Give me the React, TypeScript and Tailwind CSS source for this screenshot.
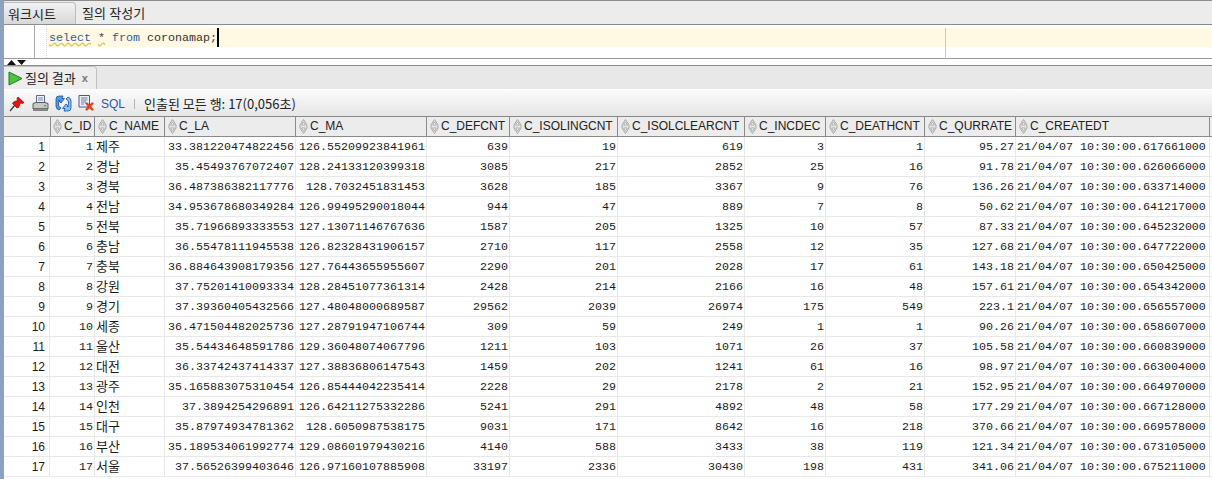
import React from 'react';

const columns = [
  { name: 'C_ID', w: 'w-[45px]' },
  { name: 'C_NAME', w: 'w-[70px]' },
  { name: 'C_LA', w: 'w-[131px]' },
  { name: 'C_MA', w: 'w-[131px]' },
  { name: 'C_DEFCNT', w: 'w-[83px]' },
  { name: 'C_ISOLINGCNT', w: 'w-[108px]' },
  { name: 'C_ISOLCLEARCNT', w: 'w-[127px]' },
  { name: 'C_INCDEC', w: 'w-[81px]' },
  { name: 'C_DEATHCNT', w: 'w-[99px]' },
  { name: 'C_QURRATE', w: 'w-[91px]' },
  { name: 'C_CREATEDT', w: 'w-[194px]' },
];

const rows = [
  ['1', '제주', '33.381220474822456', '126.55209923841961', '639', '19', '619', '3', '1', '95.27', '617661000'],
  ['2', '경남', '35.45493767072407', '128.24133120399318', '3085', '217', '2852', '25', '16', '91.78', '626066000'],
  ['3', '경북', '36.487386382117776', '128.7032451831453', '3628', '185', '3367', '9', '76', '136.26', '633714000'],
  ['4', '전남', '34.953678680349284', '126.99495290018044', '944', '47', '889', '7', '8', '50.62', '641217000'],
  ['5', '전북', '35.71966893333553', '127.13071146767636', '1587', '205', '1325', '10', '57', '87.33', '645232000'],
  ['6', '충남', '36.55478111945538', '126.82328431906157', '2710', '117', '2558', '12', '35', '127.68', '647722000'],
  ['7', '충북', '36.884643908179356', '127.76443655955607', '2290', '201', '2028', '17', '61', '143.18', '650425000'],
  ['8', '강원', '37.75201410093334', '128.28451077361314', '2428', '214', '2166', '16', '48', '157.61', '654342000'],
  ['9', '경기', '37.39360405432566', '127.48048000689587', '29562', '2039', '26974', '175', '549', '223.1', '656557000'],
  ['10', '세종', '36.471504482025736', '127.28791947106744', '309', '59', '249', '1', '1', '90.26', '658607000'],
  ['11', '울산', '35.54434648591786', '129.36048074067796', '1211', '103', '1071', '26', '37', '105.58', '660839000'],
  ['12', '대전', '36.33742437414337', '127.38836806147543', '1459', '202', '1241', '61', '16', '98.97', '663004000'],
  ['13', '광주', '35.165883075310454', '126.85444042235414', '2228', '29', '2178', '2', '21', '152.95', '664970000'],
  ['14', '인천', '37.3894254296891', '126.64211275332286', '5241', '291', '4892', '48', '58', '177.29', '667128000'],
  ['15', '대구', '35.87974934781362', '128.6050987538175', '9031', '171', '8642', '16', '218', '370.66', '669578000'],
  ['16', '부산', '35.189534061992774', '129.08601979430216', '4140', '588', '3433', '38', '119', '121.34', '673105000'],
  ['17', '서울', '37.56526399403646', '126.97160107885908', '33197', '2336', '30430', '198', '431', '341.06', '675211000'],
];

const SortIcon = () => (
  <svg width="9" height="15" viewBox="0 0 9 15" className="shrink-0">
    <path d="M4.5 0.5 L8 6 L8 9 L4.5 14.5 L1 9 L1 6 Z" fill="#e4e4e4" stroke="#a8a8a8" />
    <path d="M4.5 3 L6.3 6 H2.7 Z M4.5 12 L6.3 9 H2.7 Z" fill="#fafafa" stroke="#9a9a9a" strokeWidth="0.7" />
  </svg>
);

const PlayIcon = () => (
  <svg width="15" height="15" viewBox="0 0 15 15">
    <path d="M1 1 L14 7.5 L1 14 Z" fill="#4fc43a" stroke="#1c7a22" strokeWidth="1" />
  </svg>
);

const PinIcon = () => (
  <svg width="16" height="16" viewBox="0 0 16 16">
    <path d="M1 15 L6 9" stroke="#333" strokeWidth="1.2" />
    <path d="M9 1 L15 6.5 L13.5 7.5 L11.5 7 L9.5 11.5 L8 12 L3.5 7.5 L4.5 6 L8.5 4.5 L8 2.5 Z" fill="#e01515" stroke="#8c0a0a" strokeWidth="0.7" />
  </svg>
);

const PrinterIcon = () => (
  <svg width="17" height="17" viewBox="0 0 17 17">
    <path d="M4.5 0.5 H12.5 V8 H4.5 Z" fill="#eef2f8" stroke="#5a6a88" />
    <path d="M6 3 H11 M6 5 H11" stroke="#7a8aa8" />
    <path d="M1 8.5 L4 7.5 H13 L16 8.5 V14 H1 Z" fill="#c8c8c8" stroke="#5c5c5c" />
    <path d="M1.5 13.5 H15.5 V15.5 H1.5 Z" fill="#8c8c8c" stroke="#5c5c5c" strokeWidth="0.6" />
    <rect x="12" y="10" width="2" height="1.5" fill="#3ab54a" />
  </svg>
);

const RefreshIcon = () => (
  <svg width="17" height="17" viewBox="0 0 17 17">
    <path d="M1 4 Q1 1 4 1 L8 1 L7 3.5 L9.5 3.5 L6 8 L3.5 5.5 L5 5.5 Q3.5 6 3.5 8 L3.5 11 L6 13 L4 15 Q1 14 1 11 Z" fill="#4d9be8" stroke="#1a4f9c" strokeWidth="0.8" />
    <path d="M16 13 Q16 16 13 16 L9 16 L10 13.5 L7.5 13.5 L11 9 L13.5 11.5 L12 11.5 Q13.5 11 13.5 9 L13.5 6 L11 4 L13 2 Q16 3 16 6 Z" fill="#86c0f2" stroke="#1a4f9c" strokeWidth="0.8" />
  </svg>
);

const DocCloseIcon = () => (
  <svg width="17" height="17" viewBox="0 0 17 17">
    <path d="M1 0.5 H11.5 V12 H1 Z" fill="#eef0f8" stroke="#4a5a8c" />
    <path d="M3 3 H9.5 M3 5 H9.5 M3 7 H8 M3 9 H6" stroke="#6a78a8" />
    <path d="M7.5 8.5 L9 7.5 L11.5 10 L14 7.5 L15.5 8.5 L13 11.5 L15.5 14.5 L14 15.5 L11.5 13 L9 15.5 L7.5 14.5 L10 11.5 Z" fill="#e8451c" stroke="#a82c10" strokeWidth="0.5" />
  </svg>
);

const HeaderRow = () => (
  <div className="flex h-[21px] border-y border-[#8a8a8a] bg-[#ececec] text-[12px] leading-[19px] text-[#222] font-['Liberation_Sans',sans-serif]">
    <div className="w-[46px] shrink-0" />
    {columns.map((col, i) => (
      <div
        key={col.name}
        className={`${col.w} flex shrink-0 items-center gap-[2px] overflow-hidden border-r border-[#8a8a8a] ${i === 0 ? 'border-l pl-[2px]' : 'pl-[3px]'}`}
      >
        <SortIcon />
        <span className="whitespace-nowrap">{col.name}</span>
      </div>
    ))}
  </div>
);

const DataRow = ({ index, row }: { index: number; row: string[] }) => (
  <div className="flex h-5 border-b border-[#e8e8e8] text-[11.67px] leading-[21px] text-[#1a1a1a] font-['Liberation_Mono',monospace]">
    <div className="w-[46px] shrink-0 border-r border-[#e8e8e8] pr-[4px] text-right text-[12px] font-['Liberation_Sans',sans-serif]">
      {index}
    </div>
    {columns.map((col, i) => {
      if (i === 1) {
        return (
          <div key={col.name} className={`${col.w} shrink-0 border-r border-[#e8e8e8] pl-px text-[13px] leading-[18px] font-['Noto_Sans_CJK_KR',sans-serif]`}>
            {row[1]}
          </div>
        );
      }
      if (i === 10) {
        return (
          <div key={col.name} className={`${col.w} shrink-0 whitespace-pre border-r border-[#e8e8e8] pl-px`}>
            {`21/04/07 10:30:00.${row[10]}`}
          </div>
        );
      }
      return (
        <div key={col.name} className={`${col.w} shrink-0 border-r border-[#e8e8e8] pr-px text-right`}>
          {row[i]}
        </div>
      );
    })}
  </div>
);

const App: React.FC = () => {
  return (
    <div className="flex h-[479px] w-[1212px] overflow-hidden bg-white font-['Noto_Sans_CJK_KR',sans-serif] text-[13px] text-[#222]">
      <div className="w-1 shrink-0 bg-[#8ea2bf]" />
      <div className="flex min-w-0 flex-1 flex-col">
        {/* worksheet tabs */}
        <div className="flex h-[25px] shrink-0 items-end border-y border-[#8c8c8c] bg-[#ececec]">
          <div className="flex h-[22px] w-[72px] items-center rounded-tr-sm border-r border-t border-[#bdbdbd] bg-gradient-to-b from-[#f2f2f2] to-[#d8d8d8] pl-1">
            워크시트
          </div>
          <div className="flex h-[22px] items-center pl-[6px] tracking-[0.1px]">질의 작성기</div>
        </div>

        {/* sql editor */}
        <div className="relative flex h-[34px] shrink-0 border-b border-[#9a9a9a] bg-white">
          <div className="w-[31px] shrink-0 border-r border-[#a8a8a8]" />
          <div className="w-3 shrink-0 border-r border-dotted border-[#d8d8d8]" />
          <div className="mt-[3px] h-[19px] flex-1 bg-[#fff8e3] pl-[2px] text-[11.67px] leading-[21px] whitespace-pre font-['Liberation_Mono',monospace]">
            <span className="text-[#2a5f9e] underline decoration-[#e8bb30] decoration-wavy">select</span>{' '}
            <span className="text-[#444] underline decoration-[#e8bb30] decoration-wavy">*</span>{' '}
            <span className="text-[#2a5f9e]">from</span> <span className="text-[#333]">coronamap;</span>
            <span className="inline-block h-[19px] w-[2px] bg-black align-top" />
          </div>
          <div className="absolute left-[941px] top-[3px] h-[30px] w-px bg-[#c8c8c8]" />
        </div>

        {/* splitter */}
        <div className="flex h-[7px] shrink-0 items-start gap-px border-b border-[#8c8c8c] bg-white pl-[3px] pt-px">
          <svg width="21" height="5" viewBox="0 0 21 5">
            <path d="M0 5 L4.5 0 L9 5 Z M10 0 H19 L14.5 5 Z" fill="#111" />
          </svg>
        </div>

        {/* result tab */}
        <div className="flex h-6 shrink-0 items-end border-b border-white bg-[#e8e8e8]">
          <div className="flex h-[23px] w-[93px] items-center rounded-tr-sm border-r border-t border-[#c0c0c0] bg-[#ededed] pl-1">
            <PlayIcon />
            <span className="ml-[2px]">질의 결과</span>
            <span className="ml-[6px] text-[11px] font-bold text-[#777] font-['Liberation_Sans',sans-serif]">x</span>
          </div>
        </div>

        {/* toolbar */}
        <div className="flex h-[26px] shrink-0 items-center bg-gradient-to-b from-[#fbfbfb] to-[#e6e6e6] pl-[5px] pt-px">
          <PinIcon />
          <div className="ml-[7px] flex items-center gap-[6px]">
            <PrinterIcon />
            <RefreshIcon />
            <DocCloseIcon />
          </div>
          <span className="ml-[6px] text-[12px] text-[#1f56b4] font-['Liberation_Sans',sans-serif]">SQL</span>
          <div className="ml-[9px] h-[10px] w-px bg-[#b4b4b4]" />
          <span className="ml-[9px] whitespace-nowrap">인출된 모든 행: 17(0,056초)</span>
        </div>

        {/* result grid */}
        <HeaderRow />
        {rows.map((row, i) => (
          <DataRow key={row[0]} index={i + 1} row={row} />
        ))}
      </div>
    </div>
  );
};

export default App;
